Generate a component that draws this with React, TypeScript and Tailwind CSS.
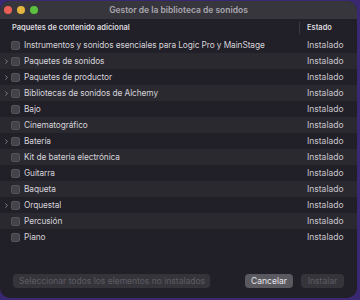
import { ChevronRight } from "lucide-react";

type Item = { name: string; expandable?: boolean };

const items: Item[] = [
  { name: "Instrumentos y sonidos esenciales para Logic Pro y MainStage" },
  { name: "Paquetes de sonidos", expandable: true },
  { name: "Paquetes de productor", expandable: true },
  { name: "Bibliotecas de sonidos de Alchemy", expandable: true },
  { name: "Bajo" },
  { name: "Cinematográfico" },
  { name: "Batería", expandable: true },
  { name: "Kit de batería electrónica" },
  { name: "Guitarra" },
  { name: "Baqueta" },
  { name: "Orquestal", expandable: true },
  { name: "Percusión" },
  { name: "Piano" },
];

function Row({ item, idx }: { item: Item; idx: number }) {
  return (
    <div
      className={`flex h-4 items-center ${idx % 2 === 1 ? "bg-[#2a2930]" : "bg-[#211f27]"}`}
    >
      <div className="flex w-[10px] shrink-0 justify-end">
        {item.expandable && (
          <ChevronRight className="h-[7px] w-[7px] text-[#8d8b92]" strokeWidth={3} />
        )}
      </div>
      <span className="ml-px h-[9px] w-[9px] shrink-0 rounded-[2px] border border-[#56545b] bg-[#45434a]" />
      <span className="ml-[4px] flex-1 truncate text-[8.3px] tracking-[-0.01em] text-[#d6d4da]">
        {item.name}
      </span>
      <span className="w-[50px] shrink-0 text-[8.5px] text-[#c9c7cd]">Instalado</span>
    </div>
  );
}

export default function App() {
  return (
    <div
      className="h-[300px] w-[360px] bg-[#3b2872] pt-px"
      style={{ fontFamily: "Inter, 'Liberation Sans', sans-serif" }}
    >
      <div className="flex h-[297px] w-[357px] flex-col overflow-hidden rounded-[10px] bg-[#211f27]">
        <div className="grid h-[18px] shrink-0 grid-cols-[1fr_auto_1fr] items-center bg-[#38363d]">
          <div className="flex items-center gap-[5px] pl-[4px]">
            <span className="h-[8px] w-[8px] rounded-full bg-[#ec5f57]" />
            <span className="h-[8px] w-[8px] rounded-full bg-[#e3b540]" />
            <span className="h-[8px] w-[8px] rounded-full bg-[#5cc03f]" />
          </div>
          <span className="text-[8.5px] font-semibold text-[#a9a6ad]">
            Gestor de la biblioteca de sonidos
          </span>
          <div />
        </div>

        <div className="flex h-[18px] shrink-0 items-center">
          <span className="flex-1 pl-[12px] text-[7.5px] font-semibold text-[#dcdadf]">
            Paquetes de contenido adicional
          </span>
          <span className="h-[12px] w-px bg-[#3b3940]" />
          <span className="w-[57px] pl-[7px] text-[7.5px] font-semibold text-[#dcdadf]">Estado</span>
        </div>

        <div className="flex flex-col">
          {items.map((item, i) => (
            <Row key={i} item={item} idx={i} />
          ))}
        </div>

        <div className="flex-1" />

        <div className="flex items-center px-[13px] pb-[10px] text-[8.5px]">
          <button className="h-[14px] w-[197px] whitespace-nowrap rounded-[4px] bg-[#36343b] pl-[6px] text-left text-[#5e5c63]">
            Seleccionar todos los elementos no instalados
          </button>
          <div className="flex-1" />
          <button className="h-[14px] w-[48px] whitespace-nowrap rounded-[4px] bg-[#5b5960] text-[#e8e6eb]">
            Cancelar
          </button>
          <button className="ml-[8px] h-[14px] w-[43px] whitespace-nowrap rounded-[4px] bg-[#36343b] text-[#5e5c63]">
            Instalar
          </button>
        </div>
      </div>
    </div>
  );
}
